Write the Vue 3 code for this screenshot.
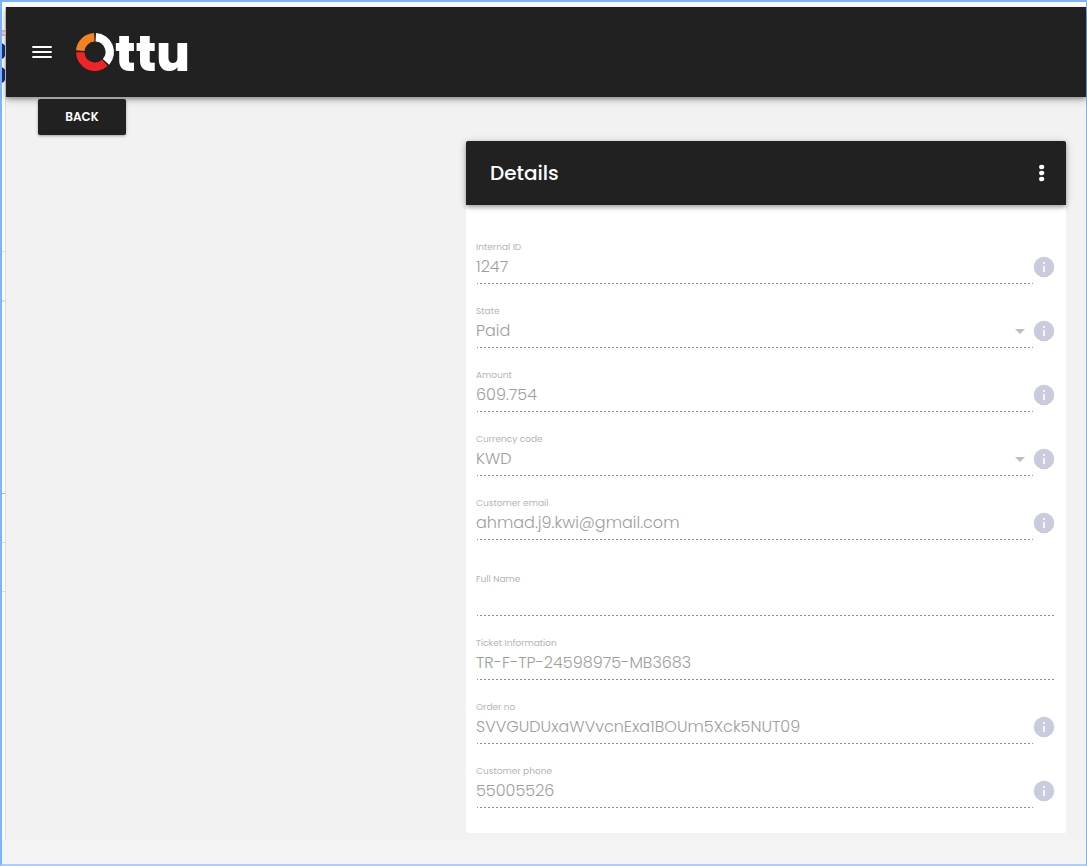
<script setup>
import { reactive } from 'vue'

const groups = reactive([
  [
    { id: 'internal-id', label: 'Internal ID', value: '1247', info: true },
    { id: 'state', label: 'State', value: 'Paid', info: true, select: true },
    { id: 'amount', label: 'Amount', value: '609.754', info: true },
    { id: 'currency', label: 'Currency code', value: 'KWD', info: true, select: true },
    { id: 'email', label: 'Customer email', value: 'ahmad.j9.kwi@gmail.com', info: true },
  ],
  [
    { id: 'full-name', label: 'Full Name', value: '', info: false },
    { id: 'ticket', label: 'Ticket Information', value: 'TR-F-TP-24598975-MB3683', info: false },
    { id: 'order-no', label: 'Order no', value: 'SVVGUDUxaWVvcnExa1BOUm5Xck5NUT09', info: true },
    { id: 'phone', label: 'Customer phone', value: '55005526', info: true },
  ],
])
</script>

<template>
  <div class="frame">
    <div class="shell">
      <svg class="edge" aria-hidden="true">
        <circle cx="1" cy="26" r="2.500" fill="none" stroke="#f58a8a" />
        <path d="M0 25H2M0 27H2" stroke="#f58a8a" />
        <ellipse cx="-1" cy="44" rx="5" ry="8" fill="#16307c" />
        <ellipse cx="-1" cy="68" rx="5" ry="8" fill="#16307c" />
        <rect y="244" width="4" height="1" fill="#dddddd" />
        <rect y="293" width="4" height="2" fill="#dddddd" />
        <rect y="486" width="4" height="1" fill="#b8b8b8" />
        <rect y="535" width="4" height="1" fill="#dddddd" />
        <rect y="584" width="4" height="1" fill="#dddddd" />
        <rect x="3" width="1" height="100%" fill="#dddddd" />
      </svg>
      <div class="app">
        <header class="topbar">
          <button class="icon-button" type="button" aria-label="Menu">
            <svg width="24" height="24" viewBox="0 0 24 24" fill="#fff">
              <path d="M2.300 6H21.700V8H2.300zM2.300 11H21.700V13H2.300zM2.300 16H21.700V18H2.300z" />
            </svg>
          </button>
          <a class="logo" href="#">
            <svg width="114" height="42" viewBox="0 0 114 42" role="img" aria-label="Ottu">
              <g fill="none" stroke-width="8.500">
                <path d="M6.250 19.700A14.750 14.750 0 0 1 20.300 6.250" stroke="#f58220" />
                <path d="M21.800 6.250A14.750 14.750 0 0 1 32 30.800" stroke="#fff" />
                <path d="M30.900 31.900A14.750 14.750 0 0 1 6.250 21.200" stroke="#ee2429" />
              </g>
              <text class="wordmark" x="41" y="40">ttu</text>
            </svg>
          </a>
        </header>

        <main class="content">
          <button class="back" type="button">BACK</button>
          <section class="card">
            <div class="card-head">
              <h1>Details</h1>
              <button class="icon-button" type="button" aria-label="More options">
                <svg width="24" height="24" viewBox="0 0 24 24" fill="#fff">
                  <ellipse cx="11.700" cy="6" rx="2.600" ry="2.300" />
                  <ellipse cx="11.700" cy="12" rx="2.600" ry="2.300" />
                  <ellipse cx="11.700" cy="18" rx="2.600" ry="2.300" />
                </svg>
              </button>
            </div>
            <form class="form">
              <div v-for="(group, i) in groups" :key="i" class="group">
                <div v-for="f in group" :key="f.id" class="row">
                  <div class="field">
                    <label :for="f.id">{{ f.label }}</label>
                    <div v-if="f.select" class="select-wrap">
                      <select :id="f.id" v-model="f.value" class="control" disabled>
                        <option>{{ f.value }}</option>
                      </select>
                      <svg class="caret" width="10" height="5" viewBox="0 0 10 5" aria-hidden="true">
                        <path d="M0 0H10L5 5z" fill="#bdbdbd" />
                      </svg>
                    </div>
                    <input v-else :id="f.id" v-model="f.value" class="control" type="text" disabled />
                  </div>
                  <button v-if="f.info" class="info" type="button" :aria-label="'About ' + f.label">
                    <svg width="22" height="22" viewBox="0 0 22 22" aria-hidden="true">
                      <circle cx="11" cy="11" r="10.300" fill="#c9cddb" />
                      <path d="M10.200 6H11.800V8H10.200zM10.200 10H11.800V16H10.200z" fill="#fff" />
                    </svg>
                  </button>
                </div>
              </div>
            </form>
          </section>
        </main>
      </div>
    </div>
  </div>
</template>

<style>
body {
  background: #f4f4f4;
}
</style>

<style scoped>
.frame {
  box-sizing: border-box;
  min-height: 100vh;
  padding-top: 5px;
  padding-bottom: 24px;
  display: flex;
  flex-direction: column;
  border: 2px solid #7cb5fb;
  border-right-width: 1px;
  border-bottom-color: #a9cffb;
  background: linear-gradient(#fff 0 5px, #f4f4f4 5px);
  font-family: Poppins, Inter, "Liberation Sans", sans-serif;
}

.shell {
  flex: 1;
  display: flex;
}

.edge {
  flex: none;
  width: 4px;
  height: auto;
  background: #fff;
  overflow: hidden;
}

.app {
  flex: 1;
  min-width: 0;
  display: flex;
  flex-direction: column;
  background: #f2f2f2;
}

.topbar {
  height: 90px;
  display: flex;
  align-items: center;
  gap: 20px;
  padding: 0 24px;
  background: #212121;
  box-shadow: 0 2px 4px rgba(0, 0, 0, 0.3), 0 4px 8px rgba(0, 0, 0, 0.16);
}

.icon-button,
.info {
  display: flex;
  padding: 0;
  border: 0;
  background: none;
}

.logo {
  display: flex;
}

.logo svg {
  overflow: visible;
}

.wordmark {
  fill: #fff;
  font-size: 49px;
  font-weight: 800;
}

.content {
  display: flex;
  flex-direction: column;
  align-items: flex-start;
  gap: 6px;
  padding: 2px 20px 7px 32px;
}

.back {
  height: 36px;
  min-width: 88px;
  padding: 0 16px;
  border: 0;
  border-radius: 2px;
  background: #212121;
  color: #fff;
  font-family: inherit;
  font-size: 12px;
  font-weight: 600;
  box-shadow: 0 1px 3px rgba(0, 0, 0, 0.35);
}

.card {
  width: 100%;
  max-width: 600px;
  align-self: flex-end;
  border-radius: 2px;
  background: #fff;
}

.card-head {
  height: 64px;
  display: flex;
  align-items: center;
  justify-content: space-between;
  padding: 0 12px 0 24px;
  border-radius: 2px 2px 0 0;
  background: #212121;
  box-shadow: 0 2px 4px rgba(0, 0, 0, 0.3), 0 1px 8px rgba(0, 0, 0, 0.16);
}

h1 {
  margin: 0;
  color: #fff;
  font-size: 20px;
  font-weight: 500;
}

.form {
  display: flex;
  flex-direction: column;
  gap: 33px;
  padding: 36px 10px 25px;
}

.group {
  display: flex;
  flex-direction: column;
  gap: 21px;
}

.row {
  display: flex;
  align-items: center;
}

.field {
  flex: 1;
  min-width: 0;
  display: flex;
  flex-direction: column;
}

label {
  color: #b4b4b4;
  font-size: 9px;
  line-height: 12px;
}

.control {
  display: block;
  box-sizing: border-box;
  width: 100%;
  height: 31px;
  margin: 0;
  padding: 0 0 4px;
  appearance: none;
  border: 0;
  border-radius: 0;
  background: repeating-linear-gradient(to right, #8c8c8c 0 1px, transparent 1px 3px, #8c8c8c 3px 4px) right bottom / calc(100% - 1px) 1px no-repeat;
  color: #9e9e9e;
  opacity: 1;
  font-family: inherit;
  font-size: 16px;
  font-weight: 300;
}

.select-wrap {
  position: relative;
}

.caret {
  position: absolute;
  right: 8px;
  top: 12px;
}

.info {
  margin: 9px 1px 0 0;
}
</style>
